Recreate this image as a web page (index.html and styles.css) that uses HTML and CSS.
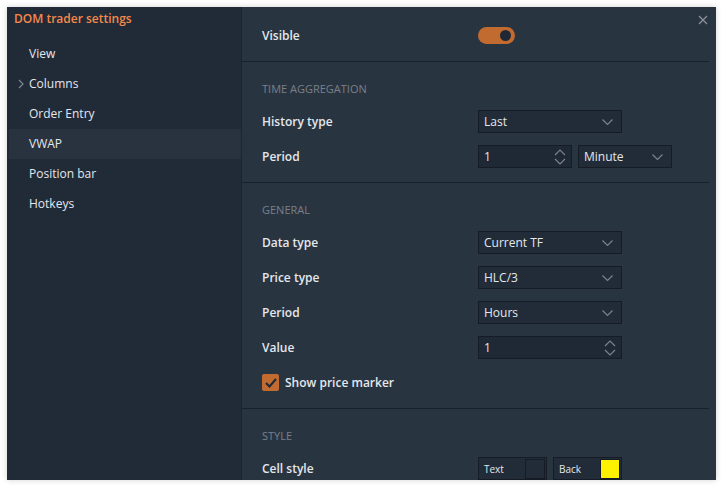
FILE: index.html
```html
<!DOCTYPE html>
<html>
<head>
<meta charset="utf-8">
<link rel="stylesheet" href="styles.css">
</head>
<body>
<div class="dialog">
  <aside class="sidebar">
    <div class="title">DOM trader settings</div>
    <ul class="nav">
      <li class="nav-item">View</li>
      <li class="nav-item"><svg class="nav-chev" width="6" height="10" viewBox="0 0 6 10"><path d="M1 1l4 4-4 4" fill="none" stroke="#7d8590" stroke-width="1.2"/></svg>Columns</li>
      <li class="nav-item">Order Entry</li>
      <li class="nav-item active">VWAP</li>
      <li class="nav-item">Position bar</li>
      <li class="nav-item">Hotkeys</li>
    </ul>
  </aside>
  <main class="content">
    <button class="close" aria-label="close"><svg width="10" height="10" viewBox="0 0 10 10"><path d="M1 1l8 8M9 1l-8 8" stroke="#8a919b" stroke-width="1.3"/></svg></button>
    <section class="section first">
      <div class="row">
        <div class="label">Visible</div>
        <div class="controls"><div class="toggle"><span class="knob"></span></div></div>
      </div>
    </section>
    <section class="section">
      <div class="header">TIME AGGREGATION</div>
      <div class="row">
        <div class="label">History type</div>
        <div class="controls"><div class="select"><span>Last</span><svg class="chev" width="11" height="6" viewBox="0 0 11 6"><path d="M0.5 0.5l5 5 5-5" fill="none" stroke="#7d8590" stroke-width="1.1"/></svg></div></div>
      </div>
      <div class="row">
        <div class="label">Period</div>
        <div class="controls">
          <div class="number short"><span>1</span><svg class="spin" width="12" height="16" viewBox="0 0 12 16"><path d="M1 6l5-5 5 5M1 10l5 5 5-5" fill="none" stroke="#7d8590" stroke-width="1.1"/></svg></div>
          <div class="select short"><span>Minute</span><svg class="chev" width="11" height="6" viewBox="0 0 11 6"><path d="M0.5 0.5l5 5 5-5" fill="none" stroke="#7d8590" stroke-width="1.1"/></svg></div>
        </div>
      </div>
    </section>
    <section class="section">
      <div class="header">GENERAL</div>
      <div class="row">
        <div class="label">Data type</div>
        <div class="controls"><div class="select"><span>Current TF</span><svg class="chev" width="11" height="6" viewBox="0 0 11 6"><path d="M0.5 0.5l5 5 5-5" fill="none" stroke="#7d8590" stroke-width="1.1"/></svg></div></div>
      </div>
      <div class="row">
        <div class="label">Price type</div>
        <div class="controls"><div class="select"><span>HLC/3</span><svg class="chev" width="11" height="6" viewBox="0 0 11 6"><path d="M0.5 0.5l5 5 5-5" fill="none" stroke="#7d8590" stroke-width="1.1"/></svg></div></div>
      </div>
      <div class="row">
        <div class="label">Period</div>
        <div class="controls"><div class="select"><span>Hours</span><svg class="chev" width="11" height="6" viewBox="0 0 11 6"><path d="M0.5 0.5l5 5 5-5" fill="none" stroke="#7d8590" stroke-width="1.1"/></svg></div></div>
      </div>
      <div class="row">
        <div class="label">Value</div>
        <div class="controls"><div class="number"><span>1</span><svg class="spin" width="12" height="16" viewBox="0 0 12 16"><path d="M1 6l5-5 5 5M1 10l5 5 5-5" fill="none" stroke="#7d8590" stroke-width="1.1"/></svg></div></div>
      </div>
      <div class="row check-row">
        <span class="checkbox"><svg width="12" height="10" viewBox="0 0 12 10"><path d="M1 5l3.5 3.5L11 1" fill="none" stroke="#1f2935" stroke-width="2"/></svg></span>
        <span class="check-label">Show price marker</span>
      </div>
    </section>
    <section class="section last">
      <div class="header">STYLE</div>
      <div class="row">
        <div class="label">Cell style</div>
        <div class="controls">
          <div class="colorbox"><span>Text</span><span class="swatch dark"></span></div>
          <div class="colorbox"><span>Back</span><span class="swatch yellow"></span></div>
        </div>
      </div>
    </section>
  </main>
</div>
</body>
</html>
```

FILE: styles.css
```css
* { box-sizing: border-box; }
html, body { margin: 0; padding: 0; background: #ffffff; }
body {
  font-family: "Open Sans", "Noto Sans", sans-serif;
  font-size: 12px;
  color: #e4e7ec;
  padding: 7px;
}
.dialog {
  width: 709px;
  height: 473px;
  display: flex;
  overflow: hidden;
  box-shadow: 0 0 6px rgba(0,0,0,0.18);
  background: #293441;
}
.sidebar {
  width: 235px;
  flex: none;
  background: #212b38;
  border-right: 1px solid #1c2531;
}
.title {
  height: 23px;
  line-height: 23px;
  padding-left: 7px;
  color: #f5884a;
  font-weight: 600;
  font-size: 12px;
  margin-bottom: 9px;
}
.nav { list-style: none; margin: 0; padding: 0; }
.nav-item {
  position: relative;
  height: 30px;
  line-height: 30px;
  margin-left: 2px;
  padding-left: 20px;
  font-weight: 500;
  color: #e4e7ec;
}
.nav-item.active { background: #29333f; }
.nav-chev { position: absolute; left: 9px; top: 10px; }
.content {
  flex: 1;
  position: relative;
  padding-right: 7px;
}
.close {
  position: absolute;
  right: 7px;
  top: 7px;
  width: 12px;
  height: 12px;
  padding: 0;
  border: 0;
  background: none;
  display: flex;
  align-items: center;
  justify-content: center;
}
.section {
  border-bottom: 1px solid #18202a;
  padding: 18px 0 8px 20px;
}
.section.first { padding-top: 11px; }
.section.last { border-bottom: 0; }
.header {
  height: 18px;
  line-height: 18px;
  margin-bottom: 6px;
  color: #7a8089;
  font-size: 11px;
}
.row {
  height: 35px;
  display: flex;
  align-items: center;
}
.label {
  width: 216px;
  flex: none;
  font-weight: 600;
}
.controls { display: flex; gap: 6px; align-items: center; }
.toggle {
  width: 37px;
  height: 17px;
  border-radius: 9px;
  background: #c26b30;
  position: relative;
}
.knob {
  position: absolute;
  right: 4px;
  top: 3px;
  width: 11px;
  height: 11px;
  border-radius: 50%;
  background: #1f2935;
}
.select, .number, .colorbox {
  height: 23px;
  background: #222c39;
  border: 1px solid #151c25;
  display: flex;
  align-items: center;
  justify-content: space-between;
  padding: 0 8px 0 5px;
  font-weight: 500;
}
.select { width: 144px; }
.number { width: 144px; background: #1f2936; padding-right: 5px; }
.short { width: 94px; }
.chev { margin-top: 1px; }
.colorbox {
  width: 69px;
  padding: 0 1px 0 5px;
  font-size: 10px;
}
.swatch {
  width: 20px;
  height: 20px;
  border: 1px solid #151c25;
}
.swatch.dark { background: #222c39; }
.swatch.yellow { background: #fff200; }
.check-row { gap: 6px; }
.checkbox {
  width: 17px;
  height: 17px;
  border-radius: 2px;
  background: #c26b30;
  display: flex;
  align-items: center;
  justify-content: center;
}
.check-label { font-weight: 600; }
```
